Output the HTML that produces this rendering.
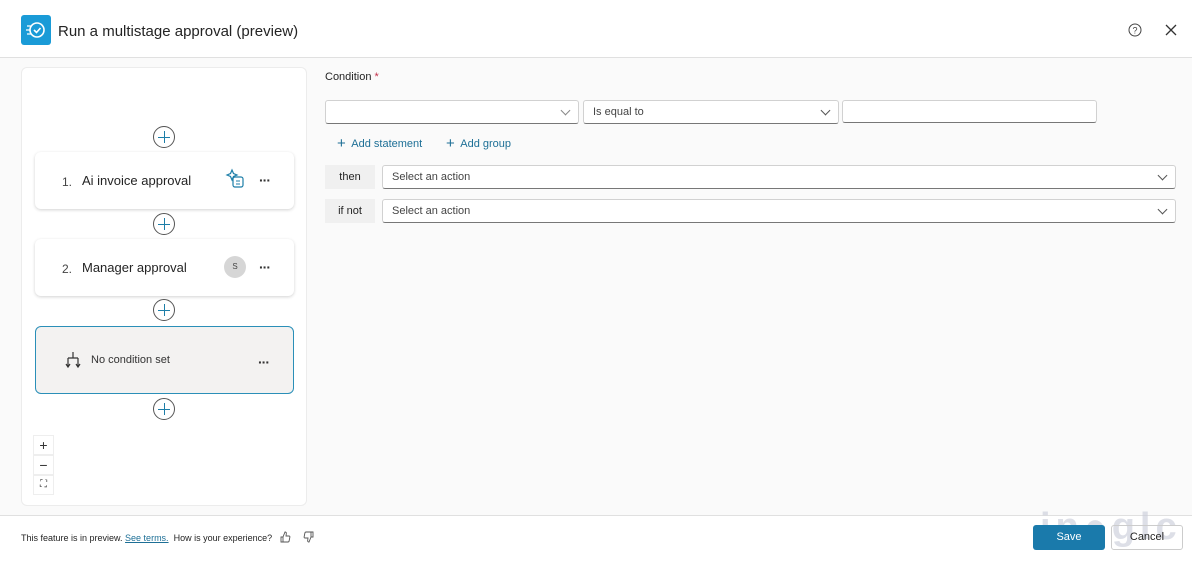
<!DOCTYPE html>
<html><head><style>
*{box-sizing:border-box;margin:0;padding:0}
body{width:1192px;height:562px;overflow:hidden;background:#fafafa;font-family:"Liberation Sans",sans-serif;color:#242424;position:relative}
.hdr{position:absolute;left:0;top:0;width:1192px;height:58px;background:#fff;border-bottom:1px solid #e0e0e0}
.logo{position:absolute;left:21px;top:15px;width:30px;height:30px;background:#1a9bd7;border-radius:3px}
.title{position:absolute;left:58px;top:23px;font-size:15px;color:#242424}
.panel{position:absolute;left:21px;top:67px;width:286px;height:439px;background:#fff;border:1px solid #ececec;border-radius:6px}
.card{position:absolute;left:13px;width:259px;height:57px;background:#fff;border-radius:6px;box-shadow:0 1px 3px rgba(0,0,0,.18)}
.num{position:absolute;left:27px;top:23px;font-size:12px;color:#444}
.nm{position:absolute;left:47px;top:21px;font-size:13px;color:#242424}
.dots{position:absolute;font-size:14px;letter-spacing:-1px;font-weight:bold;color:#333}
.plus{position:absolute;left:131px;width:22px;height:22px;border:1.3px solid #555;border-radius:50%}
.plus:before{content:"";position:absolute;left:4px;top:9.5px;width:12px;height:1.3px;background:#1d7ea8}
.plus:after{content:"";position:absolute;left:9.5px;top:4px;width:1.3px;height:12px;background:#1d7ea8}
.zm{position:absolute;left:11px;width:21px;height:20px;background:#fff;border:1px solid #eee;font-size:14px;text-align:center;line-height:18px;color:#333}
.lbl{position:absolute;font-size:11px;color:#242424}
.inp{position:absolute;height:24px;background:#fff;border:1px solid #d1d1d1;border-bottom-color:#777;border-radius:3px;font-size:11px;color:#444;padding:5px 9px}
.chev{position:absolute;right:9px;top:6px;width:7px;height:7px;border-right:1px solid #555;border-bottom:1px solid #555;transform:rotate(45deg)}
.tag{position:absolute;left:325px;width:50px;height:24px;background:#f0f0f0;font-size:11px;text-align:center;line-height:24px;color:#242424}
.ftr{position:absolute;left:0;top:515px;width:1192px;height:47px;background:#fff;border-top:1px solid #e0e0e0}
</style></head><body>
<div class="hdr">
<div class="logo"><svg width="30" height="30" viewBox="0 0 30 30"><circle cx="16" cy="15" r="7" fill="none" stroke="#fff" stroke-width="1.6"/><path d="M13 15l2.5 2.5 4-4.5" fill="none" stroke="#fff" stroke-width="1.6"/><path d="M6 11h4M5 15h4M6 19h4" stroke="#fff" stroke-width="1.3"/></svg></div>
<div class="title">Run a multistage approval (preview)</div>
<svg style="position:absolute;left:1128px;top:23px" width="14" height="14"><circle cx="7" cy="7" r="6" fill="none" stroke="#444" stroke-width="1"/><text x="7" y="10.5" font-size="9" text-anchor="middle" fill="#444" font-family="Liberation Sans">?</text></svg>
<svg style="position:absolute;left:1165px;top:24px" width="12" height="12"><path d="M1 1L11 11M11 1L1 11" stroke="#333" stroke-width="1.3"/></svg>
</div>
<div class="panel">
<div class="plus" style="top:58px"></div>
<div class="card" style="top:84px"><span class="num">1.</span><span class="nm">Ai invoice approval</span>
<svg style="position:absolute;left:189px;top:16px" width="22" height="22" viewBox="0 0 22 22"><path d="M8 2l1.5 3.5L13 7l-3.5 1.5L8 12 6.5 8.5 3 7l3.5-1.5z" fill="none" stroke="#1d7ea8" stroke-width="1.2"/><rect x="9" y="9" width="10" height="10" rx="2" fill="none" stroke="#1d7ea8" stroke-width="1.2"/><path d="M12 13h4M12 16h4" stroke="#1d7ea8" stroke-width="1.1"/></svg>
<span class="dots" style="left:224px;top:20px">···</span></div>
<div class="plus" style="top:145px"></div>
<div class="card" style="top:171px"><span class="num">2.</span><span class="nm">Manager approval</span>
<div style="position:absolute;left:189px;top:17px;width:22px;height:22px;border-radius:50%;background:#d6d6d6;font-size:8px;text-align:center;line-height:22px;color:#444">S</div>
<span class="dots" style="left:224px;top:20px">···</span></div>
<div class="plus" style="top:231px"></div>
<div class="card" style="top:258px;height:68px;background:#f3f2f1;border:1.5px solid #2a8fb8;box-shadow:none">
<svg style="position:absolute;left:28px;top:24px" width="18" height="18" viewBox="0 0 18 18"><path d="M9 1v6M4 7h10M4 7v9M14 7v9M2 13l2 3 2-3M12 13l2 3 2-3" fill="none" stroke="#333" stroke-width="1.2"/></svg>
<span style="position:absolute;left:55px;top:27px;font-size:11px;color:#333">No condition set</span>
<span class="dots" style="left:222px;top:27px">···</span></div>
<div class="plus" style="top:330px"></div>
<div class="zm" style="top:367px">+</div>
<div class="zm" style="top:387px">−</div>
<div class="zm" style="top:407px;font-size:10px">⛶</div>
</div>
<div class="lbl" style="left:325px;top:71px">Condition <span style="color:#c4314b">*</span></div>
<div class="inp" style="left:325px;top:100px;width:254px"><span class="chev" style="border-color:#888"></span></div>
<div class="inp" style="left:583px;top:100px;width:256px">Is equal to<span class="chev"></span></div>
<div class="inp" style="left:842px;top:100px;width:255px;height:23px"></div>
<div class="lbl" style="left:337px;top:134px;color:#1d6f96;font-size:11px"><span style="font-size:15px;position:relative;top:1px">+</span>&nbsp; Add statement</div>
<div class="lbl" style="left:446px;top:134px;color:#1d6f96;font-size:11px"><span style="font-size:15px;position:relative;top:1px">+</span>&nbsp; Add group</div>
<div class="tag" style="top:165px">then</div>
<div class="inp" style="left:382px;top:165px;width:794px">Select an action<span class="chev"></span></div>
<div class="tag" style="top:199px">if not</div>
<div class="inp" style="left:382px;top:199px;width:794px">Select an action<span class="chev"></span></div>
<div class="ftr">
<span style="position:absolute;left:21px;top:17px;font-size:9px;color:#242424">This feature is in preview. <span style="color:#1d6f96;text-decoration:underline">See terms.</span>&nbsp; How is your experience?</span>
<svg style="position:absolute;left:279px;top:15px" width="12" height="12" viewBox="0 0 12 12"><path d="M2 6h2v5H2zM4 6l2-5c1 0 1.5.6 1.3 1.6L7 5h3c.6 0 1 .5.9 1l-.8 4c-.1.6-.6 1-1.2 1H4" fill="none" stroke="#555" stroke-width=".9"/></svg>
<svg style="position:absolute;left:303px;top:15px" width="12" height="12" viewBox="0 0 12 12"><g transform="rotate(180 6 6)"><path d="M2 6h2v5H2zM4 6l2-5c1 0 1.5.6 1.3 1.6L7 5h3c.6 0 1 .5.9 1l-.8 4c-.1.6-.6 1-1.2 1H4" fill="none" stroke="#555" stroke-width=".9"/></g></svg>
<div style="position:absolute;left:1040px;top:-10px;font-size:38px;font-weight:bold;color:#c8cbd8;letter-spacing:5px;opacity:.6">in●glc</div>
<div style="position:absolute;left:1033px;top:9px;width:72px;height:25px;background:#1a7aab;border-radius:3px;color:#fff;font-size:11px;text-align:center;line-height:25px">Save</div>
<div style="position:absolute;left:1111px;top:9px;width:72px;height:25px;border:1px solid #ccc;border-radius:3px;color:#242424;font-size:11px;text-align:center;line-height:23px">Cancel</div>
</div>
</body></html>
